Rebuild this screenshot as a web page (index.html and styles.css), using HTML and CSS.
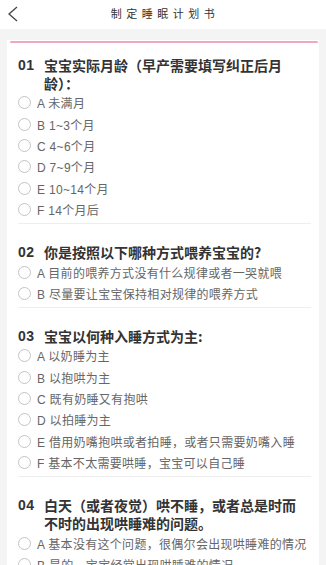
FILE: index.html
```html
<!DOCTYPE html>
<html lang="zh">
<head>
<meta charset="utf-8">
<link rel="stylesheet" href="styles.css">
</head>
<body>
<header class="topbar">
  <svg class="back" width="12" height="16" viewBox="0 0 12 16"><path d="M10 1 L2 8 L10 15" fill="none" stroke="#444" stroke-width="1.3"/></svg>
  <div class="page-title">制定睡眠计划书</div>
</header>
<main class="wrap">
  <div class="card">
    <div class="accent"></div>
    <section class="q first">
      <div class="q-title"><span class="num">01</span><span class="txt">宝宝实际月龄（早产需要填写纠正后月龄）：</span></div>
      <div class="opt"><span class="radio"></span>A 未满月</div>
      <div class="opt"><span class="radio"></span>B 1~3个月</div>
      <div class="opt"><span class="radio"></span>C 4~6个月</div>
      <div class="opt"><span class="radio"></span>D 7~9个月</div>
      <div class="opt"><span class="radio"></span>E 10~14个月</div>
      <div class="opt"><span class="radio"></span>F 14个月后</div>
    </section>
    <section class="q">
      <div class="q-title"><span class="num">02</span><span class="txt">你是按照以下哪种方式喂养宝宝的?</span></div>
      <div class="opt"><span class="radio"></span>A 目前的喂养方式没有什么规律或者一哭就喂</div>
      <div class="opt"><span class="radio"></span>B 尽量要让宝宝保持相对规律的喂养方式</div>
    </section>
    <section class="q">
      <div class="q-title"><span class="num">03</span><span class="txt">宝宝以何种入睡方式为主:</span></div>
      <div class="opt"><span class="radio"></span>A 以奶睡为主</div>
      <div class="opt"><span class="radio"></span>B 以抱哄为主</div>
      <div class="opt"><span class="radio"></span>C 既有奶睡又有抱哄</div>
      <div class="opt"><span class="radio"></span>D 以拍睡为主</div>
      <div class="opt"><span class="radio"></span>E 借用奶嘴抱哄或者拍睡，或者只需要奶嘴入睡</div>
      <div class="opt"><span class="radio"></span>F 基本不太需要哄睡，宝宝可以自己睡</div>
    </section>
    <section class="q">
      <div class="q-title"><span class="num">04</span><span class="txt">白天（或者夜觉）哄不睡，或者总是时而不时的出现哄睡难的问题。</span></div>
      <div class="opt"><span class="radio"></span>A 基本没有这个问题，很偶尔会出现哄睡难的情况</div>
      <div class="opt"><span class="radio"></span>B 是的，宝宝经常出现哄睡难的情况</div>
    </section>
  </div>
</main>
</body>
</html>
```

FILE: styles.css
```css
* { box-sizing: border-box; }
html, body { margin: 0; padding: 0; }
body {
  background: #f4f4f4;
  font-family: "Liberation Sans", "Noto Sans CJK SC", sans-serif;
  width: 326px;
  height: 565px;
  overflow: hidden;
}
.topbar {
  position: relative;
  height: 29px;
  background: #fff;
  display: flex;
  align-items: center;
  justify-content: center;
}
.back {
  position: absolute;
  left: 7px;
  top: 6px;
}
.page-title {
  font-family: "Noto Sans CJK SC", sans-serif;
  font-size: 11px;
  letter-spacing: 4.5px;
  color: #333;
  padding-left: 4px;
  margin-top: -4px;
}
.wrap {
  padding: 11px 7px 0 7px;
}
.card {
  background: #fff;
  position: relative;
  padding: 0 8px 0 11px;
}
.accent {
  position: relative;
  height: 2px;
  margin: 0 -7px 0 -8px;
  background: #f0a6bd;
  border-radius: 2px;
  top: 1px;
}
.q {
  padding-top: 19px;
  padding-bottom: 3px;
  border-bottom: 1px solid #eeeeee;
}
.q.first { padding-top: 14px; }
.q-title {
  display: flex;
  font-size: 14px;
  font-weight: bold;
  line-height: 18px;
  color: #333;
  padding-right: 8px;
}
.num {
  flex: 0 0 26px;
  letter-spacing: 0.5px;
}
.txt {
  flex: 1;
  font-family: "Noto Sans CJK SC", sans-serif;
}
.opt {
  display: flex;
  align-items: center;
  height: 21.4px;
  font-size: 12px;
  letter-spacing: 0.3px;
  color: #666;
  font-family: "Liberation Sans", "Noto Sans CJK SC", sans-serif;
  white-space: nowrap;
}
.radio {
  width: 13px;
  height: 13px;
  border: 1px solid #c4c4c4;
  border-radius: 50%;
  margin-right: 6px;
  flex: 0 0 13px;
}
```
